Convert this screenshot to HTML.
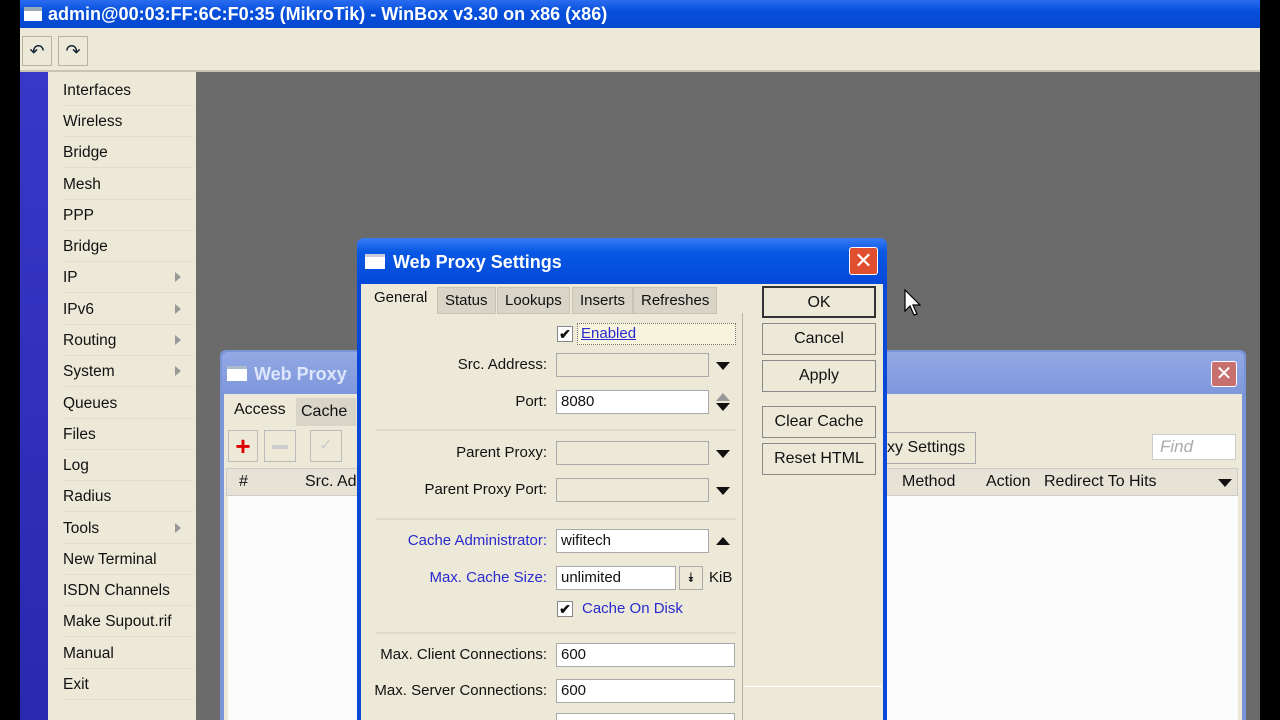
<!DOCTYPE html>
<html style="overflow:hidden;width:1280px;height:720px"><head><meta charset="utf-8"><style>
*{box-sizing:border-box;margin:0;padding:0}
body{width:1280px;height:720px;overflow:hidden;background:#000;font-family:"Liberation Sans",sans-serif;font-size:16px;color:#111;position:relative}
.a{position:absolute}
.title{left:20px;top:0;width:1240px;height:28px;background:linear-gradient(#2a6cf0,#0650dc 40%,#0548d0);color:#fff;font-weight:bold;font-size:18px;line-height:28px;padding-left:28px}
.tb{left:20px;top:28px;width:1240px;height:44px;background:#ece9d8;border-bottom:2px solid #c8c4b4}
.tbtn{top:36px;width:30px;height:30px;border:1px solid #b8b4a4;background:#ece9d8}
.side{left:20px;top:72px;width:28px;height:648px;background:linear-gradient(#3838c8,#2828b0)}
.menu{left:48px;top:72px;width:148px;height:648px;background:#ece9d8}
.mi{position:absolute;left:15px;height:31px;width:130px;line-height:31px;font-size:15.5px;border-bottom:1px solid #e2ddd0}
.arr{position:absolute;right:12px;top:10px;width:0;height:0;border-left:6px solid #999;border-top:5px solid transparent;border-bottom:5px solid transparent}
.gray{left:196px;top:72px;width:1064px;height:648px;background:#6b6b6b}
.win{background:#ece9d8}
.field{position:absolute;height:24px;border:1px solid #a9a9a9;background:#fff;padding-left:4px;line-height:22px;font-size:15px}
.field.dis{background:#ece9d8}
.lbl{position:absolute;text-align:right;font-size:15px;width:300px;line-height:24px}
.btn{position:absolute;left:762px;width:114px;height:32px;border:1px solid #888;background:#ece9d8;text-align:center;line-height:30px;font-size:16px}
.dn{position:absolute;width:0;height:0;border-left:7px solid transparent;border-right:7px solid transparent;border-top:8px solid #111}
.up{position:absolute;width:0;height:0;border-left:7px solid transparent;border-right:7px solid transparent;border-bottom:8px solid #111}
.tab{position:absolute;top:287px;height:27px;background:#d8d4c8;border:1px solid #c8c4b4;font-size:15px;line-height:25px;padding:0 7px}
.chk{position:absolute;width:16px;height:16px;border:1px solid #888;background:#fff;font-size:14px;line-height:14px;text-align:center;font-weight:bold}
.sep{position:absolute;left:376px;width:360px;height:2px;background:#dcd8cc}
</style></head><body>
<div class="a title">admin@00:03:FF:6C:F0:35 (MikroTik) - WinBox v3.30 on x86 (x86)</div>
<div class="a" style="left:24px;top:7px;width:18px;height:14px;background:#fff;border-top:4px solid #9ab"></div>
<div class="a tb"></div>
<div class="a tbtn" style="left:22px;font-size:18px;text-align:center;line-height:28px;color:#123">↶</div>
<div class="a tbtn" style="left:58px;font-size:18px;text-align:center;line-height:28px;color:#123">↷</div>
<div class="a side"></div>
<div class="a menu">
<div class="mi" style="top:3px">Interfaces</div>
<div class="mi" style="top:34px">Wireless</div>
<div class="mi" style="top:65px">Bridge</div>
<div class="mi" style="top:97px">Mesh</div>
<div class="mi" style="top:128px">PPP</div>
<div class="mi" style="top:159px">Bridge</div>
<div class="mi" style="top:190px">IP<span class="arr"></span></div>
<div class="mi" style="top:222px">IPv6<span class="arr"></span></div>
<div class="mi" style="top:253px">Routing<span class="arr"></span></div>
<div class="mi" style="top:284px">System<span class="arr"></span></div>
<div class="mi" style="top:316px">Queues</div>
<div class="mi" style="top:347px">Files</div>
<div class="mi" style="top:378px">Log</div>
<div class="mi" style="top:409px">Radius</div>
<div class="mi" style="top:441px">Tools<span class="arr"></span></div>
<div class="mi" style="top:472px">New Terminal</div>
<div class="mi" style="top:503px">ISDN Channels</div>
<div class="mi" style="top:534px">Make Supout.rif</div>
<div class="mi" style="top:566px">Manual</div>
<div class="mi" style="top:597px">Exit</div>
</div>
<div class="a gray"></div>

<div class="a" style="left:220px;top:350px;width:1026px;height:370px;background:#7a94d8;border-radius:6px 6px 0 0"></div>
<div class="a" style="left:222px;top:352px;width:1022px;height:42px;background:linear-gradient(#93a8e4,#7e98dc);color:#dde6fa;font-weight:bold;font-size:18px;line-height:44px;padding-left:32px;border-radius:6px 6px 0 0">Web Proxy</div>
<div class="a" style="left:227px;top:366px;width:20px;height:15px;background:#fff;border-top:3px solid #abc"></div>
<div class="a" style="left:1211px;top:361px;width:26px;height:26px;background:#c87070;border:1px solid #fff;border-radius:3px;color:#fff;text-align:center;line-height:24px;font-size:20px">✕</div>
<div class="a win" style="left:224px;top:394px;width:1018px;height:326px"></div>
<div class="a" style="left:226px;top:396px;width:70px;height:30px;font-size:16px;line-height:28px;padding-left:8px">Access</div>
<div class="a" style="left:296px;top:398px;width:60px;height:28px;background:#d8d4c8;font-size:16px;line-height:28px;padding-left:5px">Cache</div>
<div class="a" style="left:228px;top:430px;width:30px;height:32px;border:1px solid #bbb;color:#d00;font-size:26px;font-weight:bold;text-align:center;line-height:30px">+</div>
<div class="a" style="left:264px;top:430px;width:32px;height:32px;border:1px solid #bbb;"><div style="margin:14px 7px;height:4px;background:#ccc"></div></div>
<div class="a" style="left:310px;top:430px;width:32px;height:32px;border:1px solid #bbb;color:#ccc;text-align:center;line-height:30px">✓</div>
<div class="a" style="left:876px;top:432px;width:100px;height:32px;border:1px solid #aaa;font-size:16px;line-height:30px;padding-left:10px">xy Settings</div>
<div class="a" style="left:1152px;top:434px;width:84px;height:26px;background:#fff;border:1px solid #ccc;color:#aaa;font-style:italic;font-size:17px;line-height:24px;padding-left:7px">Find</div>
<div class="a" style="left:226px;top:468px;width:1012px;height:28px;background:#e6e2d6;border:1px solid #ccc;font-size:16px;line-height:26px">
<span class="a" style="left:12px">#</span><span class="a" style="left:78px">Src. Ad</span><span class="a" style="left:675px">Method</span><span class="a" style="left:759px">Action</span><span class="a" style="left:817px">Redirect To</span><span class="a" style="left:902px">Hits</span><span class="dn" style="left:991px;top:10px"></span></div>
<div class="a" style="left:228px;top:496px;width:1010px;height:224px;background:#fdfcfc"></div>

<div class="a" style="left:357px;top:238px;width:530px;height:482px;background:#0a48d8;border-radius:7px 7px 0 0"></div>
<div class="a" style="left:357px;top:238px;width:530px;height:46px;background:linear-gradient(#3a7cf4,#0858e4 30%,#0448d8);color:#fff;font-weight:bold;font-size:18px;line-height:48px;padding-left:36px;border-radius:7px 7px 0 0">Web Proxy Settings</div>
<div class="a" style="left:365px;top:254px;width:20px;height:15px;background:#fff;border-top:3px solid #ccd"></div>
<div class="a" style="left:849px;top:247px;width:29px;height:28px;background:#e05030;border:1px solid #fff;border-radius:3px;color:#fff;text-align:center;line-height:26px;font-size:22px">✕</div>
<div class="a win" style="left:361px;top:284px;width:522px;height:436px"></div>
<div class="a" style="left:742px;top:313px;width:1px;height:407px;background:#b8b4a4"></div>
<div class="a" style="left:366px;top:284px;width:70px;height:30px;font-size:15px;line-height:28px;padding-left:8px">General</div>
<div class="tab" style="left:437px">Status</div>
<div class="tab" style="left:497px">Lookups</div>
<div class="tab" style="left:572px">Inserts</div>
<div class="tab" style="left:633px">Refreshes</div>
<div class="btn" style="top:286px;border:2px solid #333">OK</div>
<div class="btn" style="top:323px">Cancel</div>
<div class="btn" style="top:360px">Apply</div>
<div class="btn" style="top:406px">Clear Cache</div>
<div class="btn" style="top:443px">Reset HTML</div>

<div class="chk" style="left:557px;top:326px">✔</div>
<div class="a" style="left:577px;top:323px;width:159px;height:22px;border:1px dotted #777;background:#f6f4dc;color:#2a2ad0;font-size:15px;line-height:20px;padding-left:3px;text-decoration:underline">Enabled</div>
<div class="lbl" style="left:247px;top:353px">Src. Address:</div>
<div class="field dis" style="left:556px;top:353px;width:153px"></div><div class="dn" style="left:716px;top:362px"></div>
<div class="lbl" style="left:247px;top:390px">Port:</div>
<div class="field" style="left:556px;top:390px;width:153px">8080</div>
<div class="up" style="left:716px;top:393px;border-bottom-color:#999"></div><div class="dn" style="left:716px;top:403px"></div>
<div class="sep" style="top:429px"></div>
<div class="lbl" style="left:247px;top:441px">Parent Proxy:</div>
<div class="field dis" style="left:556px;top:441px;width:153px"></div><div class="dn" style="left:716px;top:450px"></div>
<div class="lbl" style="left:247px;top:478px">Parent Proxy Port:</div>
<div class="field dis" style="left:556px;top:478px;width:153px"></div><div class="dn" style="left:716px;top:487px"></div>
<div class="sep" style="top:518px"></div>
<div class="lbl" style="left:247px;top:529px;color:#2a2ad0">Cache Administrator:</div>
<div class="field" style="left:556px;top:529px;width:153px">wifitech</div><div class="up" style="left:716px;top:537px"></div>
<div class="lbl" style="left:247px;top:566px;color:#2a2ad0">Max. Cache Size:</div>
<div class="field" style="left:556px;top:566px;width:120px">unlimited</div>
<div class="a" style="left:679px;top:566px;width:24px;height:24px;border:1px solid #aaa;text-align:center;line-height:22px;font-size:13px">⯯</div>
<div class="a" style="left:709px;top:566px;font-size:15px;line-height:24px">KiB</div>
<div class="chk" style="left:557px;top:601px">✔</div>
<div class="a" style="left:582px;top:598px;color:#2a2ad0;font-size:15px;line-height:22px">Cache On Disk</div>
<div class="sep" style="top:632px"></div>
<div class="lbl" style="left:247px;top:643px">Max. Client Connections:</div>
<div class="field" style="left:556px;top:643px;width:179px">600</div>
<div class="lbl" style="left:247px;top:679px">Max. Server Connections:</div>
<div class="field" style="left:556px;top:679px;width:179px">600</div>
<div class="field" style="left:556px;top:713px;width:179px;height:7px;border-bottom:none"></div>
<div class="a" style="left:744px;top:686px;width:138px;height:1px;background:#fff"></div>

<svg class="a" style="left:904px;top:289px" width="20" height="30"><path d="M1 1 L1 22 L6 17 L10 26 L13 25 L9 16 L16 16 Z" fill="#fff" stroke="#000" stroke-width="1.2"/></svg>
</body></html>
